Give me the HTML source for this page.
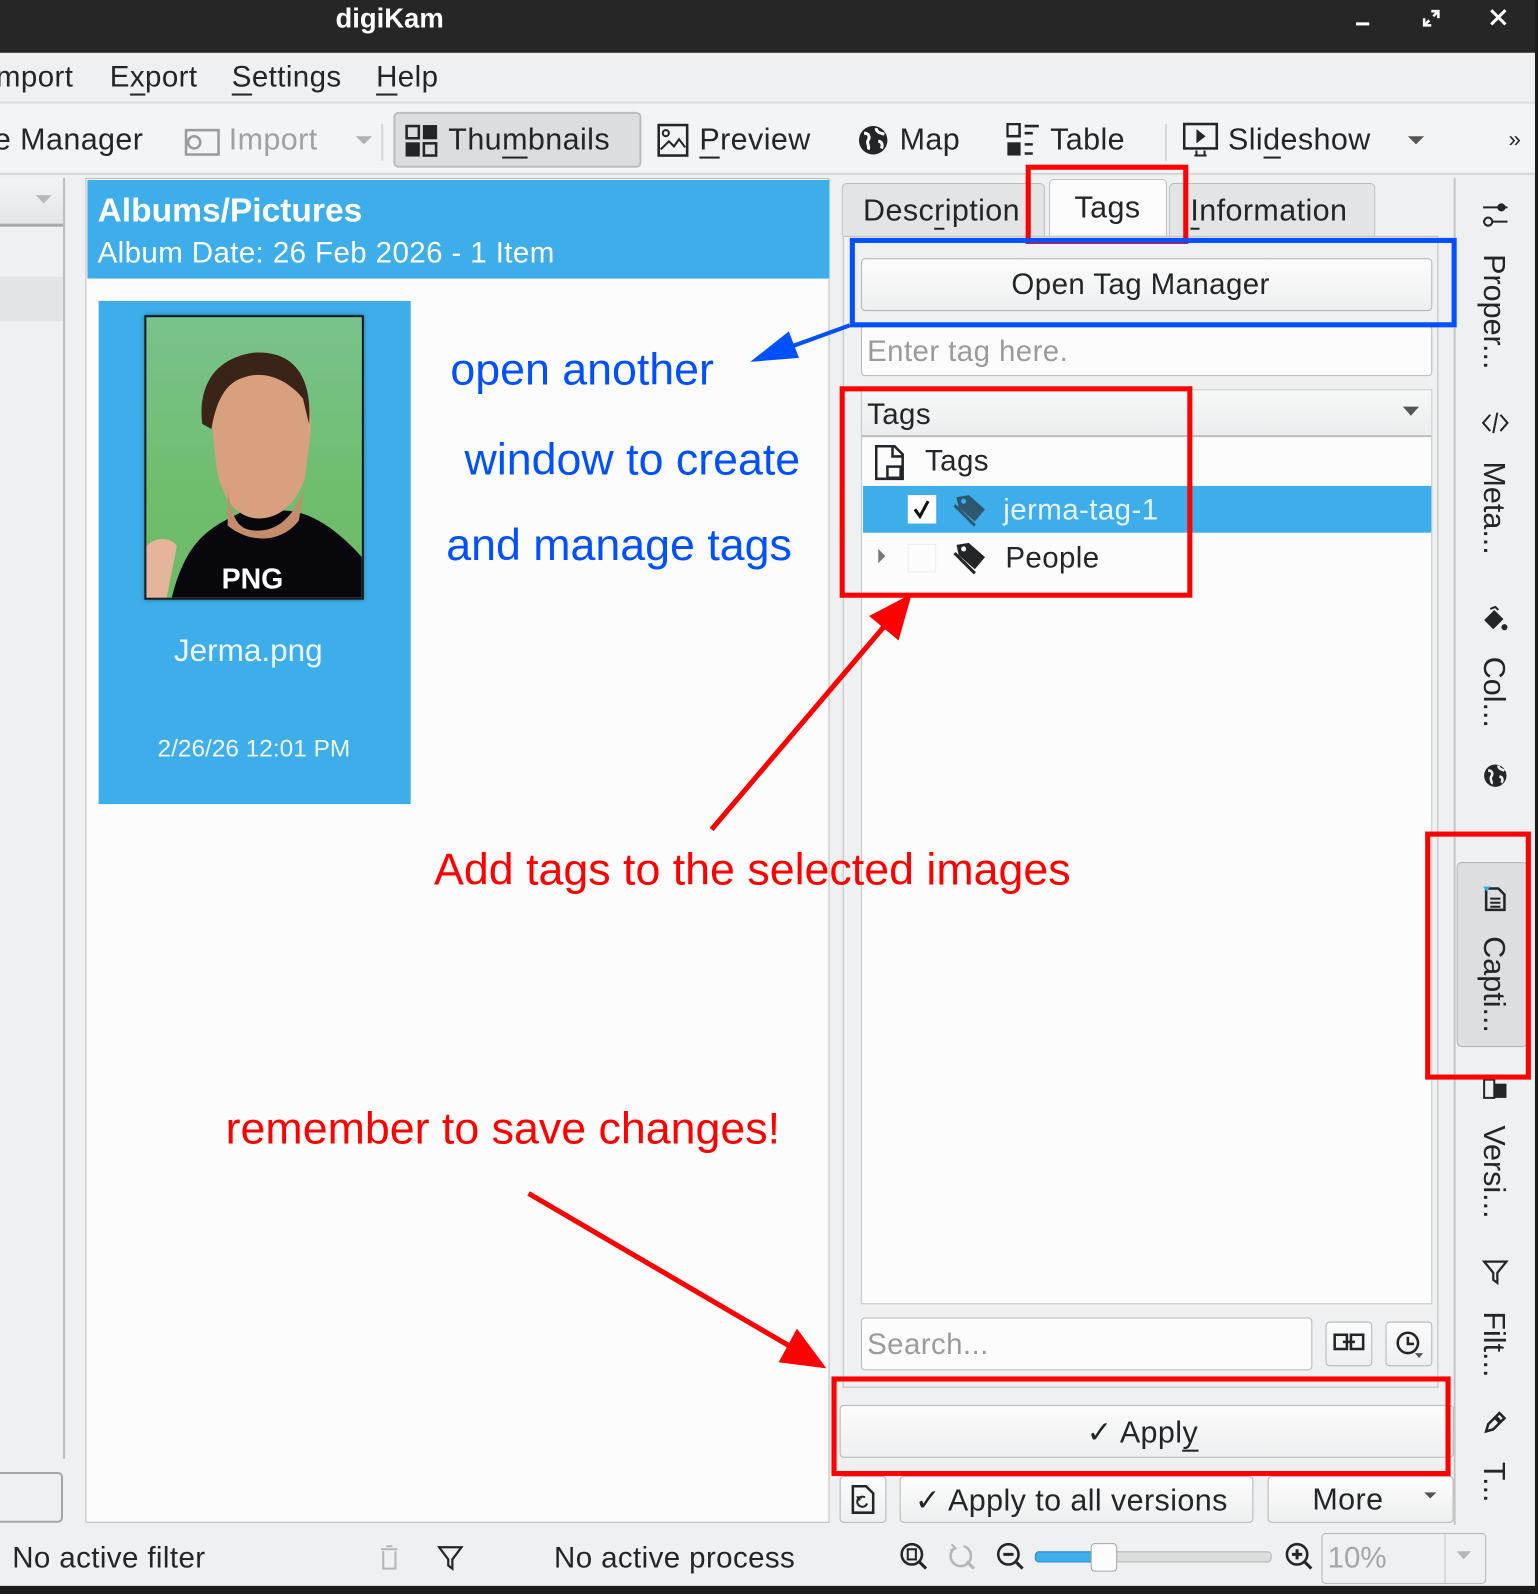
<!DOCTYPE html>
<html><head><meta charset="utf-8">
<style>
html,body{margin:0;padding:0;background:#1c1c1c;overflow:hidden;width:1538px;height:1594px}
#w{position:absolute;left:0;top:0;width:1513px;height:1568px;transform:scale(1.01652,1.01658);transform-origin:0 0;background:#eff0f1;font-family:"Liberation Sans",sans-serif;color:#232629;overflow:hidden}
.a{position:absolute}
.t{position:absolute;white-space:nowrap}
.ui{letter-spacing:0.4px}
u{text-decoration:none;border-bottom:2px solid #232629}
.btn{position:absolute;border:1px solid #b5b6b7;border-radius:4px;background:linear-gradient(#fcfcfc,#eeeff0);box-sizing:border-box}
.vt{position:absolute;writing-mode:vertical-rl;font-size:30px;color:#232629;white-space:nowrap}
.an{font-size:44px}
</style></head><body>
<div id="w">
<!-- title bar -->
<div class="a" style="left:0;top:0;width:1513px;height:52px;background:#262626"></div>
<div class="t" style="left:330px;top:3px;font-size:27px;font-weight:bold;color:#fff">digiKam</div>
<div class="a" style="left:1334px;top:22px;width:13px;height:3px;background:#fff"></div>
<svg class="a" style="left:1398px;top:8px" width="20" height="20"><path d="M3 10v7h7M17 10V3h-7M3 17l5-5M17 3l-5 5" stroke="#fff" stroke-width="2.5" fill="none"/></svg>
<svg class="a" style="left:1464px;top:7px" width="20" height="20"><path d="M3 3l14 14M17 3L3 17" stroke="#fff" stroke-width="3"/></svg>
<div class="a" style="left:1510px;top:0;width:3px;height:1568px;background:#1c1c1c"></div>
<!-- menu -->
<div class="a" style="left:0;top:52px;width:1510px;height:48px;background:#eff0f1;border-bottom:2px solid #dcdddf"></div>
<div class="t ui" style="left:-4px;top:60px;font-size:29px">mport</div>
<div class="t ui" style="left:108px;top:60px;font-size:29px">E<u>x</u>port</div>
<div class="t ui" style="left:228px;top:60px;font-size:29px"><u>S</u>ettings</div>
<div class="t ui" style="left:370px;top:60px;font-size:29px"><u>H</u>elp</div>
<!-- toolbar -->
<div class="a" style="left:0;top:102px;width:1510px;height:68px;background:#f3f4f5;border-bottom:2px solid #d4d5d6"></div>
<div class="t ui" style="left:-6px;top:121px;font-size:30px">e Manager</div>
<svg class="a" style="left:181px;top:124px" width="36" height="30"><rect x="2" y="4" width="32" height="24" fill="none" stroke="#9a9b9c" stroke-width="2.5"/><circle cx="10" cy="16" r="6" fill="none" stroke="#9a9b9c" stroke-width="2.5"/></svg>
<div class="t ui" style="left:225px;top:121px;font-size:30px;color:#a0a1a2">Import</div>
<div class="a" style="left:350px;top:134px;border:8px solid transparent;border-top:8px solid #b0b1b2"></div>
<div class="a" style="left:375px;top:122px;width:2px;height:36px;background:#d4d5d6"></div>
<div class="a" style="left:387px;top:110px;width:244px;height:55px;background:#dcddde;border:2px solid #bcbdbe;border-radius:5px;box-sizing:border-box"></div>
<svg class="a" style="left:398px;top:122px" width="34" height="34"><rect x="2" y="2" width="12" height="12" fill="none" stroke="#232629" stroke-width="2.5"/><rect x="18" y="1" width="14" height="14" fill="#232629"/><rect x="1" y="18" width="14" height="14" fill="#232629"/><rect x="19" y="19" width="12" height="12" fill="none" stroke="#232629" stroke-width="2.5"/></svg>
<div class="t ui" style="left:441px;top:121px;font-size:30px">Thu<u>m</u>bnails</div>
<svg class="a" style="left:646px;top:121px" width="32" height="34"><rect x="2" y="2" width="28" height="30" fill="none" stroke="#232629" stroke-width="2.5"/><circle cx="9" cy="10" r="3" fill="none" stroke="#232629" stroke-width="2"/><path d="M4 26l8-8 5 5 5-7 6 8" fill="none" stroke="#232629" stroke-width="2"/></svg>
<div class="t ui" style="left:688px;top:121px;font-size:30px"><u>P</u>review</div>
<svg class="a" style="left:842px;top:121px" width="34" height="34"><circle cx="17" cy="17" r="14" fill="#232629"/><path d="M8 10c5 0 6 4 4 7s2 6 0 9M20 5c0 4 4 5 8 6M22 18c3 0 5 3 3 7" stroke="#fff" stroke-width="3" fill="none"/></svg>
<div class="t ui" style="left:885px;top:121px;font-size:30px">Map</div>
<svg class="a" style="left:990px;top:121px" width="34" height="34"><rect x="1" y="1" width="12" height="12" fill="none" stroke="#232629" stroke-width="2.5"/><rect x="1" y="19" width="13" height="13" fill="#232629"/><path d="M18 3h14M18 10h8M18 21h8M18 30h8" stroke="#232629" stroke-width="2.5"/></svg>
<div class="t ui" style="left:1033px;top:121px;font-size:30px">Table</div>
<div class="a" style="left:1146px;top:122px;width:2px;height:36px;background:#d4d5d6"></div>
<svg class="a" style="left:1163px;top:120px" width="36" height="36"><rect x="2" y="2" width="32" height="24" fill="none" stroke="#232629" stroke-width="2.5"/><path d="M14 7v14l9-7z" fill="#232629"/><path d="M14 28v5M22 28v5M12 33h12" stroke="#232629" stroke-width="2"/></svg>
<div class="t ui" style="left:1208px;top:121px;font-size:30px">Sli<u>d</u>eshow</div>
<div class="a" style="left:1385px;top:134px;border:8px solid transparent;border-top:8px solid #555"></div>
<div class="t" style="left:1484px;top:124px;font-size:22px">»</div>
<!-- left panel -->
<div class="a" style="left:0;top:175px;width:62px;height:1260px;background:#eff0f1;border-right:2px solid #bcbdbe"></div>
<div class="a" style="left:0;top:175px;width:62px;height:45px;background:linear-gradient(#f3f4f5,#e4e5e6);border-bottom:3px solid #a9aaab"></div>
<div class="a" style="left:35px;top:192px;border:8px solid transparent;border-top:8px solid #b8b9ba"></div>
<div class="a" style="left:0;top:272px;width:62px;height:44px;background:#e3e4e5"></div>
<div class="a" style="left:0;top:1448px;width:62px;height:50px;background:#eff0f1;border:2px solid #a5a6a7;border-left:none;border-radius:0 5px 5px 0;box-sizing:border-box"></div>
<!-- main view -->
<div class="a" style="left:84px;top:175px;width:732px;height:1323px;background:#fcfcfc;border:1px solid #bcbdbe;box-sizing:border-box"></div>
<div class="a" style="left:86px;top:177px;width:730px;height:97px;background:#3daee9"></div>
<div class="t" style="left:96px;top:188px;font-size:33px;font-weight:bold;color:#fff">Albums/Pictures</div>
<div class="t ui" style="left:96px;top:233px;font-size:29px;color:#fff">Album Date: 26 Feb 2026 - 1 Item</div>
<div class="a" style="left:97px;top:296px;width:307px;height:495px;background:#3daee9"></div>
<div class="a" style="left:142px;top:310px;width:216px;height:280px;border:2px solid #1b1b1b;box-sizing:border-box;background:linear-gradient(180deg,#79c28d,#6fbe6e 60%,#6dbb66);overflow:hidden;box-shadow:0 0 4px #2a6f96">
<svg width="212" height="276" style="position:absolute;left:0;top:0"><path d="M0 225c10-10 25-8 30 0l-10 51H0z" fill="#e6b49a"/><path d="M25 276c15-60 40-70 70-85l30 0c30-5 60 15 87 45v40z" fill="#08080c"/><path d="M66 120c-5-40 10-70 50-72 35 0 50 30 45 70l-5 40c-8 25-25 40-45 40-25 0-38-25-42-50z" fill="#d8a07e"/><path d="M55 105c-5-40 15-65 50-70 45-3 58 30 55 70l-6-25c-12-15-35-30-60-20-15 5-25 20-30 50z" fill="#3a2418"/><path d="M80 170c5 30 10 40 30 40 20 0 35-15 45-40l-5 30c-15 20-45 25-70 5z" fill="#c48c6c"/></svg>
<div class="t" style="left:74px;top:242px;font-size:28px;font-weight:bold;color:#fff">PNG</div>
</div>
<div class="t" style="left:171px;top:622px;font-size:31px;color:#f0f7fc">Jerma.png</div>
<div class="t" style="left:155px;top:723px;font-size:24px;color:#f0f7fc">2/26/26 12:01 PM</div>
<!-- right panel -->
<div class="a" style="left:828px;top:180px;width:200px;height:52px;background:#e3e4e5;border:1px solid #bcbdbe;border-bottom:none;border-radius:5px 5px 0 0;box-sizing:border-box"></div>
<div class="t ui" style="left:849px;top:191px;font-size:30px">Desc<u>r</u>iption</div>
<div class="a" style="left:1032px;top:176px;width:116px;height:58px;background:#fcfcfc;border:1px solid #bcbdbe;border-bottom:none;border-radius:5px 5px 0 0;box-sizing:border-box"></div>
<div class="t ui" style="left:1057px;top:188px;font-size:30px">Tags</div>
<div class="a" style="left:1150px;top:180px;width:203px;height:52px;background:#e3e4e5;border:1px solid #bcbdbe;border-bottom:none;border-radius:5px 5px 0 0;box-sizing:border-box"></div>
<div class="t ui" style="left:1171px;top:191px;font-size:30px"><u>I</u>nformation</div>
<div class="a" style="left:829px;top:232px;width:586px;height:1133px;background:#eff0f1;border:1px solid #bcbdbe;box-sizing:border-box"></div>
<div class="btn" style="left:847px;top:254px;width:562px;height:52px"></div>
<div class="t ui" style="left:995px;top:264px;font-size:29px">Open Tag Manager</div>
<div class="a" style="left:847px;top:320px;width:562px;height:50px;background:#fcfcfc;border:1px solid #b5b6b7;border-radius:4px;box-sizing:border-box"></div>
<div class="t ui" style="left:853px;top:330px;font-size:29px;color:#9a9b9c">Enter tag here.</div>
<div class="a" style="left:847px;top:383px;width:562px;height:900px;background:#fcfcfc;border:1px solid #c5c6c7;box-sizing:border-box"></div>
<div class="a" style="left:848px;top:384px;width:560px;height:44px;background:linear-gradient(#f6f7f7,#ecedee);border-bottom:2px solid #bcbdbe"></div>
<div class="t ui" style="left:853px;top:392px;font-size:29px">Tags</div>
<div class="a" style="left:1380px;top:400px;border:8px solid transparent;border-top:9px solid #555"></div>
<svg class="a" style="left:860px;top:437px" width="32" height="36"><path d="M2 2h18l8 8v24H2z" fill="none" stroke="#232629" stroke-width="2.5"/><path d="M18 2v10h10" fill="none" stroke="#232629" stroke-width="2.5"/><rect x="13" y="22" width="13" height="11" fill="none" stroke="#232629" stroke-width="2.5"/></svg>
<div class="t ui" style="left:910px;top:438px;font-size:29px">Tags</div>
<div class="a" style="left:849px;top:478px;width:559px;height:46px;background:#3daee9"></div>
<div class="a" style="left:893px;top:487px;width:28px;height:28px;background:#fff"></div>
<svg class="a" style="left:895px;top:489px" width="24" height="24"><path d="M5 12l5 7 8-15" fill="none" stroke="#111" stroke-width="3"/></svg>
<svg class="a" style="left:937px;top:483px" width="36" height="36"><path d="M4 6l12-2 16 14-10 12-16-14z" fill="#2d5870"/><path d="M2 14l14 14 6 6" stroke="#2d5870" stroke-width="3" fill="none"/><circle cx="11" cy="10" r="2.5" fill="#3daee9"/></svg>
<div class="t ui" style="left:987px;top:486px;font-size:29px;color:#e8f5fc">jerma-tag-1</div>
<div class="a" style="left:864px;top:540px;border:7px solid transparent;border-left:7px solid #777"></div>
<div class="a" style="left:893px;top:535px;width:26px;height:26px;background:#fcfcfc;border:1px solid #eee"></div>
<svg class="a" style="left:937px;top:530px" width="36" height="36"><path d="M4 6l12-2 16 14-10 12-16-14z" fill="#232629"/><path d="M2 14l14 14 6 6" stroke="#232629" stroke-width="3" fill="none"/><circle cx="11" cy="10" r="2.5" fill="#fcfcfc"/></svg>
<div class="t ui" style="left:989px;top:533px;font-size:29px">People</div>
<div class="a" style="left:847px;top:1296px;width:444px;height:52px;background:#fcfcfc;border:1px solid #b5b6b7;border-radius:4px;box-sizing:border-box"></div>
<div class="t ui" style="left:853px;top:1307px;font-size:29px;color:#9a9b9c">Search...</div>
<div class="btn" style="left:1304px;top:1300px;width:46px;height:44px"></div>
<svg class="a" style="left:1311px;top:1309px" width="32" height="24"><rect x="2" y="4" width="12" height="14" fill="none" stroke="#232629" stroke-width="2.5"/><rect x="18" y="4" width="12" height="14" fill="none" stroke="#232629" stroke-width="2.5"/><path d="M10 11h12" stroke="#232629" stroke-width="2.5"/></svg>
<div class="btn" style="left:1363px;top:1300px;width:46px;height:44px"></div>
<svg class="a" style="left:1372px;top:1307px" width="30" height="30"><circle cx="13" cy="14" r="10" fill="none" stroke="#232629" stroke-width="2.5"/><path d="M13 8v7h6" fill="none" stroke="#232629" stroke-width="2.5"/><path d="M20 24h8l-4 5z" fill="#555"/></svg>
<div class="btn" style="left:826px;top:1382px;width:604px;height:52px"></div>
<div class="t ui" style="left:1069px;top:1392px;font-size:30px">✓ Appl<u>y</u></div>
<div class="btn" style="left:826px;top:1452px;width:46px;height:46px"></div>
<svg class="a" style="left:836px;top:1460px" width="26" height="30"><path d="M3 2h13l7 7v19H3z" fill="none" stroke="#232629" stroke-width="2.5"/><path d="M15 13a5 5 0 1 0 2 6M10 16l-2-3h4" fill="none" stroke="#232629" stroke-width="2"/></svg>
<div class="btn" style="left:885px;top:1452px;width:348px;height:46px"></div>
<div class="t ui" style="left:900px;top:1459px;font-size:30px">✓ Apply to all versions</div>
<div class="btn" style="left:1247px;top:1452px;width:183px;height:46px"></div>
<div class="t ui" style="left:1291px;top:1459px;font-size:30px">More</div>
<div class="a" style="left:1401px;top:1468px;border:6px solid transparent;border-top:6px solid #555"></div>
<!-- right sidebar -->
<div class="a" style="left:1430px;top:175px;width:2px;height:1325px;background:#c5c6c7"></div>
<svg class="a" style="left:1457px;top:197px" width="28" height="28"><path d="M2 7h24M2 21h24" stroke="#232629" stroke-width="2"/><circle cx="20" cy="7" r="4" fill="#232629"/><circle cx="7" cy="21" r="4" fill="#eff0f1" stroke="#232629" stroke-width="2"/></svg>
<div class="vt" style="left:1452px;top:250px">Proper...</div>
<svg class="a" style="left:1457px;top:402px" width="28" height="28"><path d="M9 6l-7 8 7 8M19 6l7 8-7 8M16 4l-4 20" fill="none" stroke="#232629" stroke-width="2"/></svg>
<div class="vt" style="left:1452px;top:454px">Meta...</div>
<svg class="a" style="left:1457px;top:596px" width="28" height="28"><path d="M3 14l10-10 9 9-10 10z" fill="#232629"/><path d="M9 3l5-2 3 3" stroke="#232629" fill="none" stroke-width="2"/><circle cx="23" cy="21" r="3" fill="#232629"/></svg>
<div class="vt" style="left:1452px;top:646px">Col...</div>
<svg class="a" style="left:1458px;top:750px" width="26" height="26"><circle cx="13" cy="13" r="11" fill="#232629"/><path d="M6 8c4 0 5 3 3 6s2 5 0 7M16 3c0 3 3 4 6 5M17 14c3 0 4 3 2 6" stroke="#eff0f1" stroke-width="2.5" fill="none"/></svg>
<div class="a" style="left:1433px;top:848px;width:70px;height:182px;background:#dddedf;border:1px solid #b5b6b7;border-radius:5px;box-sizing:border-box"></div>
<svg class="a" style="left:1458px;top:871px" width="26" height="26"><path d="M4 3h12l6 6v15H4z" fill="none" stroke="#232629" stroke-width="2.5"/><path d="M8 13h10M8 17h10M8 21h10" stroke="#232629" stroke-width="2"/><path d="M1 1h7l-3.5 5z" fill="#3daee9"/></svg>
<div class="vt" style="left:1452px;top:921px">Capti...</div>
<svg class="a" style="left:1458px;top:1060px" width="26" height="22"><path d="M2 2h10v18H2z" fill="none" stroke="#232629" stroke-width="2"/><rect x="12" y="6" width="12" height="14" fill="#232629"/></svg>
<div class="vt" style="left:1452px;top:1107px">Versi...</div>
<svg class="a" style="left:1458px;top:1238px" width="26" height="26"><path d="M2 3h22l-9 11v10l-4-3v-7z" fill="none" stroke="#232629" stroke-width="2.2"/></svg>
<div class="vt" style="left:1452px;top:1290px">Filt...</div>
<svg class="a" style="left:1458px;top:1386px" width="26" height="26"><path d="M4 22l2-7 11-11 5 5-11 11z" fill="none" stroke="#232629" stroke-width="2.5"/><path d="M13 8l5 5" stroke="#232629" stroke-width="4"/></svg>
<div class="vt" style="left:1452px;top:1438px">T...</div>
<!-- status bar -->
<div class="t ui" style="left:12px;top:1517px;font-size:29px">No active filter</div>
<svg class="a" style="left:372px;top:1518px" width="22" height="28"><path d="M3 6h16M8 3h6M5 8v17h12V8" fill="none" stroke="#b5b6b7" stroke-width="2"/></svg>
<svg class="a" style="left:430px;top:1520px" width="26" height="26"><path d="M2 2h22l-9 12v9l-4-3v-6z" fill="none" stroke="#232629" stroke-width="2.2"/></svg>
<div class="t ui" style="left:545px;top:1517px;font-size:29px">No active process</div>
<svg class="a" style="left:885px;top:1517px" width="30" height="30"><circle cx="12" cy="12" r="10" fill="none" stroke="#232629" stroke-width="2.5"/><rect x="8" y="7" width="8" height="10" fill="none" stroke="#232629" stroke-width="2"/><path d="M19 19l7 7" stroke="#232629" stroke-width="3"/></svg>
<svg class="a" style="left:932px;top:1517px" width="30" height="30"><path d="M8 5a10 10 0 1 0 8-1" fill="none" stroke="#b5b6b7" stroke-width="2.5"/><path d="M4 2l4 4-5 2" fill="none" stroke="#b5b6b7" stroke-width="2"/><path d="M19 19l7 7" stroke="#b5b6b7" stroke-width="3"/></svg>
<svg class="a" style="left:980px;top:1517px" width="30" height="30"><circle cx="12" cy="12" r="10" fill="none" stroke="#232629" stroke-width="2.5"/><path d="M7 12h10" stroke="#232629" stroke-width="3"/><path d="M19 19l7 7" stroke="#232629" stroke-width="3"/></svg>
<div class="a" style="left:1018px;top:1526px;width:231px;height:9px;background:#dcdddd;border:1px solid #b5b6b7;border-radius:4px"></div>
<div class="a" style="left:1018px;top:1526px;width:60px;height:9px;background:#3daee9;border:1px solid #2a8fc7;border-radius:4px"></div>
<div class="a" style="left:1073px;top:1518px;width:24px;height:26px;background:#fcfcfc;border:1px solid #a5a6a7;border-radius:4px"></div>
<svg class="a" style="left:1264px;top:1517px" width="30" height="30"><circle cx="12" cy="12" r="10" fill="none" stroke="#232629" stroke-width="2.5"/><path d="M7 12h10M12 7v10" stroke="#232629" stroke-width="3"/><path d="M19 19l7 7" stroke="#232629" stroke-width="3"/></svg>
<div class="a" style="left:1300px;top:1508px;width:162px;height:50px;background:#eff0f1;border:1px solid #b5b6b7;border-radius:4px;box-sizing:border-box"></div>
<div class="a" style="left:1421px;top:1509px;width:1px;height:48px;background:#c5c6c7"></div>
<div class="t" style="left:1306px;top:1517px;font-size:29px;color:#a5a6a7">10%</div>
<div class="a" style="left:1433px;top:1526px;border:7px solid transparent;border-top:8px solid #b5b6b7"></div>
<div class="a" style="left:0;top:1560px;width:1513px;height:8px;background:#1c1c1c"></div>
<!-- annotations -->
<div class="a" style="left:1009px;top:162px;width:160px;height:78px;border:5px solid #ff0000;box-sizing:border-box"></div>
<div class="a" style="left:836px;top:234px;width:597px;height:88px;border:5px solid #0050ff;box-sizing:border-box"></div>
<div class="a" style="left:826px;top:380px;width:347px;height:208px;border:5px solid #ff0000;box-sizing:border-box"></div>
<div class="a" style="left:1402px;top:818px;width:104px;height:244px;border:5px solid #ff0000;box-sizing:border-box"></div>
<div class="a" style="left:818px;top:1354px;width:609px;height:98px;border:5px solid #ff0000;box-sizing:border-box"></div>
<div class="t an" style="left:443px;top:339px;color:#0050ff">open another</div>
<div class="t an" style="left:457px;top:428px;color:#0050ff">window to create</div>
<div class="t an" style="left:439px;top:512px;color:#0050ff">and manage tags</div>
<div class="t an" style="left:427px;top:831px;color:#ff0000">Add tags to the selected images</div>
<div class="t an" style="left:222px;top:1086px;color:#ff0000">remember to save changes!</div>
<svg class="a" style="left:0;top:0" width="1513" height="1568">
<path d="M836 320L770 344" stroke="#0050ff" stroke-width="4"/><path d="M738 356L776 326 786 352z" fill="#0050ff"/>
<path d="M700 816L870 616" stroke="#ff0000" stroke-width="5"/><path d="M897 584L855 606 884 630z" fill="#ff0000"/>
<path d="M520 1174L780 1326" stroke="#ff0000" stroke-width="5"/><path d="M813 1346L766 1340 784 1307z" fill="#ff0000"/>
</svg>
</div>
</body></html>
